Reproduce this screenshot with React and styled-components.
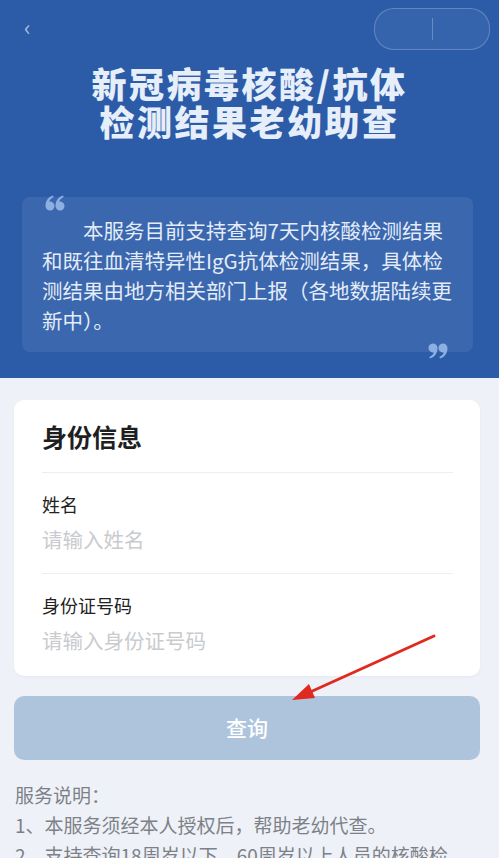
import React from 'react';
import styled, { createGlobalStyle } from 'styled-components';

const Global = createGlobalStyle`
  body {
    margin: 0;
    background: #eef2f8;
    font-family: "Noto Sans CJK SC", "Noto Sans", sans-serif;
  }
`;

const Page = styled.div`
  position: relative;
  width: 499px;
  height: 858px;
  overflow: hidden;
  background: #eef2f8;
`;

const Header = styled.div`
  background: #2c5ca8;
  height: 378px;
  box-sizing: border-box;
  padding: 8px 9px 0 22px;
`;

const TopBar = styled.div`
  display: flex;
  justify-content: space-between;
  align-items: center;
  height: 42px;
`;

const Back = styled.div`
  color: #dfe8f6;
  font-size: 22px;
  opacity: 0.7;
  margin-top: -6px;
  margin-left: 2px;
`;

const Capsule = styled.div`
  width: 114px;
  height: 40px;
  border-radius: 20px;
  border: 1px solid rgba(255, 255, 255, 0.22);
  background: rgba(255, 255, 255, 0.05);
  display: flex;
  align-items: center;
  justify-content: center;
  &:after {
    content: "";
    width: 1px;
    height: 22px;
    background: rgba(255, 255, 255, 0.25);
  }
`;

const Title = styled.h1`
  margin: 14px 13px 0 0;
  text-align: center;
  color: #e6eef9;
  font-size: 35px;
  line-height: 38px;
  font-weight: 900;
  letter-spacing: 2.5px;
`;

const QuoteBox = styled.div`
  position: relative;
  margin: 57px 17px 0 0;
  background: rgba(255, 255, 255, 0.07);
  border-radius: 8px;
  padding: 18px 20px 17px 20px;
  color: #e4ecf8;
  font-size: 20.5px;
  line-height: 30px;
  text-indent: 2em;
`;

const Mark = styled.svg`
  position: absolute;
  width: 20px;
  height: 16px;
  top: ${p => (p.$end ? '146px' : '-2px')};
  ${p => (p.$end ? 'right: 25px;' : 'left: 23px;')}
`;

const Body = styled.div`
  padding: 22px 19px 0 14px;
`;

const Card = styled.div`
  background: #fff;
  border-radius: 10px;
  padding: 0 27px 0 28px;
  height: 276px;
  box-shadow: 0 1px 3px rgba(0, 0, 0, 0.04);
`;

const CardTitle = styled.div`
  font-size: 25px;
  font-weight: 700;
  color: #1f1f1f;
  height: 72px;
  line-height: 72px;
  border-bottom: 1px solid #eceef0;
`;

const Field = styled.div`
  padding-top: 18px;
  height: 101px;
  box-sizing: border-box;
  border-bottom: ${p => (p.$last ? 'none' : '1px solid #eceef0')};
`;

const Label = styled.div`
  font-size: 18px;
  line-height: 26px;
  color: #222;
`;

const Placeholder = styled.div`
  margin-top: 8px;
  font-size: 20.5px;
  line-height: 28px;
  color: #c9cbce;
`;

const Button = styled.div`
  margin-top: 20px;
  height: 64px;
  border-radius: 10px;
  background: #adc4dc;
  color: #fff;
  font-size: 21px;
  font-weight: 500;
  display: flex;
  align-items: center;
  justify-content: center;
  padding-bottom: 3px;
  box-sizing: border-box;
`;

const Notes = styled.div`
  margin-top: 20px;
  margin-left: 1px;
  color: #7d8187;
  font-size: 19px;
  line-height: 30px;
  white-space: nowrap;
`;

const Arrow = styled.svg`
  position: absolute;
  left: 0;
  top: 0;
  pointer-events: none;
`;

const nine = 'M9.5 5 C9.5 10 7 14 2 15.5 L1.3 14 C3.8 12.8 5.4 11 5.8 9.4 A4.5 4.5 0 1 1 9.5 5 Z';

const QuoteMark = ({ end }) => (
  <Mark $end={end} viewBox="0 0 20 16">
    <g fill="#8db0e2" transform={end ? undefined : 'rotate(180 10 8)'}>
      <path d={nine} />
      <path d={nine} transform="translate(10 0)" />
    </g>
  </Mark>
);

export default function App() {
  return (
    <Page>
      <Global />
      <Header>
        <TopBar>
          <Back>‹</Back>
          <Capsule />
        </TopBar>
        <Title>
          新冠病毒核酸/抗体
          <br />
          检测结果老幼助查
        </Title>
        <QuoteBox>
          <QuoteMark />
          本服务目前支持查询7天内核酸检测结果和既往血清特异性IgG抗体检测结果，具体检测结果由地方相关部门上报（各地数据陆续更新中）。
          <QuoteMark end />
        </QuoteBox>
      </Header>
      <Body>
        <Card>
          <CardTitle>身份信息</CardTitle>
          <Field>
            <Label>姓名</Label>
            <Placeholder>请输入姓名</Placeholder>
          </Field>
          <Field $last>
            <Label>身份证号码</Label>
            <Placeholder>请输入身份证号码</Placeholder>
          </Field>
        </Card>
        <Button>查询</Button>
        <Notes>
          服务说明：
          <br />
          1、本服务须经本人授权后，帮助老幼代查。
          <br />
          2、支持查询18周岁以下、60周岁以上人员的核酸检
        </Notes>
      </Body>
      <Arrow width="499" height="858">
        <line x1="434" y1="636" x2="308" y2="693" stroke="#e02a1f" strokeWidth="3" strokeLinecap="round" />
        <polygon points="292,700 309,684 315,698" fill="#e02a1f" />
      </Arrow>
    </Page>
  );
}
